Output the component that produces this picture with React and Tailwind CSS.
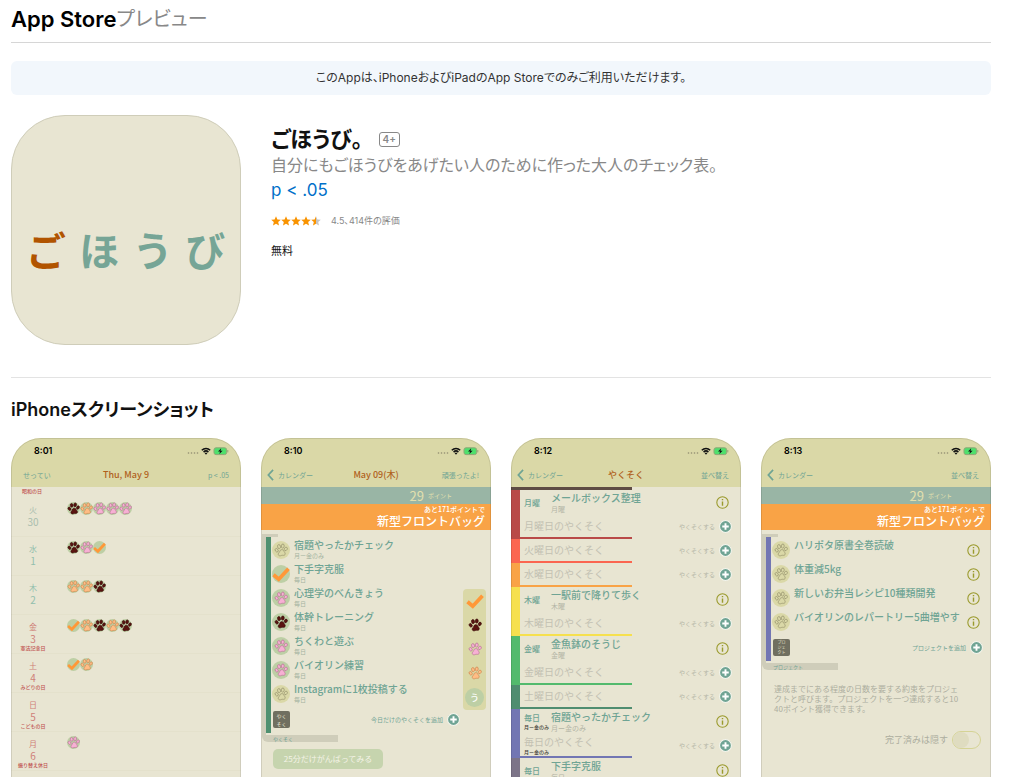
import React from 'react';

const PAW_COLORS = {
  dark: { fill: '#5a1410', stroke: '#3a0a08' },
  orange: { fill: '#ffbd85', stroke: '#cf8850' },
  pink: { fill: '#f7b0d4', stroke: '#b97595' },
  empty: { fill: 'none', stroke: '#95916c' },
};

const Paw = ({ color, className }) => {
  const { fill, stroke } = PAW_COLORS[color];
  return (
    <svg viewBox="0 0 24 24" className={className} fill={fill} stroke={stroke} strokeWidth="1.2">
      <ellipse cx="4.6" cy="12.5" rx="2.4" ry="3.2" transform="rotate(-35 4.6 12.5)" />
      <ellipse cx="8.6" cy="6.2" rx="2.5" ry="3.5" transform="rotate(-10 8.6 6.2)" />
      <ellipse cx="15" cy="5.2" rx="2.5" ry="3.5" transform="rotate(8 15 5.2)" />
      <ellipse cx="20.2" cy="10.2" rx="2.4" ry="3.2" transform="rotate(30 20.2 10.2)" />
      <path d="M12.2 11.6c2.6-.8 4.3.8 4.9 2.7.5 1.500 2.300 2.300 2.200 4.300-.1 2.300-2.400 2.900-4.300 2.400-1.500-.4-2.300.7-4.200 1-2.300.2-4-1.300-3.500-3.500.4-1.500 1.900-2 2.400-3.700.4-1.500 1-2.700 2.500-3.200z" />
    </svg>
  );
};

const Check = ({ className }) => (
  <svg viewBox="0 0 24 24" className={className} fill="none" stroke="#ff9838" strokeWidth="5">
    <path d="M2 13l7 6L22 5" />
  </svg>
);

// Round stamp used in the calendar and in the lists
const Stamp = ({ type, full }) => (
  <span className="flex size-full items-center justify-center">
    {type === 'check' ? (
      <Check className="size-full" />
    ) : (
      <Paw color={type} className={full ? 'size-full' : 'size-[14px]'} />
    )}
  </span>
);

const PlusIcon = ({ className }) => (
  <svg viewBox="0 0 24 24" className={className}>
    <circle cx="12" cy="12" r="11" fill="#6fa494" stroke="#f6f6ee" strokeWidth="2" />
    <path d="M12 6v12M6 12h12" stroke="#fff" strokeWidth="3.5" />
  </svg>
);

const InfoButton = () => (
  <button aria-label="info" className="flex size-[13px] shrink-0">
    <svg viewBox="0 0 24 24" className="size-full" fill="none" stroke="#9a9a2c">
      <circle cx="12" cy="12" r="10.5" strokeWidth="2" />
      <path d="M12 10v8M12 5.5v2.5" strokeWidth="2.6" />
    </svg>
  </button>
);

const StatusBar = ({ time }) => (
  <div className="flex h-[25px] items-center pl-[23px] pr-[12px] text-black">
    <span className="font-['Inter',sans-serif] text-[9px] font-semibold">{time}</span>
    <svg viewBox="0 0 42 10" className="ml-auto h-[10px] w-[42px]">
      <g fill="#8f8d70">
        <circle cx="1.5" cy="7" r=".8" />
        <circle cx="4.5" cy="7" r=".8" />
        <circle cx="7.5" cy="7" r=".8" />
        <circle cx="10.5" cy="7" r=".8" />
      </g>
      <g fill="none" stroke="#111" strokeWidth="1.5">
        <path d="M14.8 4.200a6 6 0 0 1 8.400 0" />
        <path d="M16.600 6.100a3.400 3.400 0 0 1 4.800 0" />
      </g>
      <path d="M19 8.800l-1.300-1.600a1.800 1.800 0 0 1 2.600 0z" fill="#111" />
      <rect x="27" y="1.8" width="12.6" height="6.8" rx="2" fill="#4fe06c" stroke="#8fa777" />
      <path d="M40.8 4v2.4" stroke="#8fa777" strokeWidth="1" />
      <path d="M34.2 2.300l-3.200 3.200h2l-.6 2.600 3.200-3.300h-2z" fill="#111" />
    </svg>
  </div>
);

const Phone = ({ time, left, back, title, right, children }) => (
  <article className="relative h-[498px] overflow-hidden rounded-[30px] bg-[#e8e5d2] font-['Noto_Sans_CJK_JP',sans-serif] text-[#6fa494] after:pointer-events-none after:absolute after:inset-0 after:rounded-[30px] after:border after:border-black/10">
    <header className="h-[49px] bg-[#dad8a7]">
      <StatusBar time={time} />
      <div className="grid h-6 grid-cols-3 items-center text-[7px] leading-3">
        <button className={`flex items-center gap-1 text-left ${back ? 'pl-[6px]' : 'pl-[12px]'}`}>
          {back && (
            <svg viewBox="0 0 8 14" className="h-[12px] w-[7px]" fill="none" stroke="currentColor" strokeWidth="2">
              <path d="M7 1L1.5 7 7 13" />
            </svg>
          )}
          {left}
        </button>
        <span className="text-center text-[9px] font-medium text-[#b0601c]">{title}</span>
        <button className="pr-[12px] text-right">{right}</button>
      </div>
    </header>
    {children}
  </article>
);

const DAYS = [
  { day: '火', date: '30', tone: 'text-[#a9bdae]', stamps: ['dark', 'orange', 'pink', 'pink', 'pink'] },
  { day: '水', date: '1', tone: 'text-[#92bfad]', stamps: ['dark', 'pink', 'check'] },
  { day: '木', date: '2', tone: 'text-[#92bfad]', stamps: ['orange', 'orange', 'dark'] },
  { day: '金', date: '3', tone: 'text-[#cf7f78]', holiday: '憲法記念日', stamps: ['check', 'orange', 'dark', 'orange', 'dark'] },
  { day: '土', date: '4', tone: 'text-[#cf7f78]', holiday: 'みどりの日', stamps: ['check', 'orange'] },
  { day: '日', date: '5', tone: 'text-[#cf7f78]', holiday: 'こどもの日', stamps: [] },
  { day: '月', date: '6', tone: 'text-[#cf7f78]', holiday: '振り替え休日', stamps: ['pink'] },
];

const CalendarShot = () => (
  <Phone time="8:01" left="せってい" title="Thu, May 9" right="p < .05">
    <p className="h-[11px] pl-[11px] text-[5px] font-medium leading-[8px] text-[#c0514f]">昭和の日</p>
    {DAYS.map((row) => (
      <div key={row.date} className="flex h-[39px] border-b border-[#e4e1cc]">
        <div className={`flex w-[44px] flex-col items-center pt-[6px] ${row.tone}`}>
          <span className="text-[8px] leading-[12px]">{row.day}</span>
          <span className="text-[10px] leading-[11px]">{row.date}</span>
          <span className="text-[5px] font-medium leading-[7px] text-[#c0514f]">{row.holiday}</span>
        </div>
        <div className="flex pl-[12px] pt-[4px]">
          {row.stamps.map((type, i) => (
            <span key={i} className="size-[13px] rounded-full bg-[#bdcfa5]">
              <Stamp type={type} full />
            </span>
          ))}
        </div>
      </div>
    ))}
  </Phone>
);

const PointsBanner = () => (
  <>
    <div className="flex h-[17px] items-center justify-end gap-1 bg-[#99b5a5] pr-[39px] text-[#e3e0ae]">
      <span className="text-[13px] leading-4">29</span>
      <span className="text-[6px]">ポイント</span>
    </div>
    <div className="h-[26px] bg-[#f9a346] pr-[6px] text-right font-medium text-white">
      <p className="text-[7px] leading-[10px]">あと171ポイントで</p>
      <p className="text-[12px] leading-[13px]">新型フロントバッグ</p>
    </div>
  </>
);

// List with the coloured spine on the left and a label at the foot
const Folder = ({ spine, label, children }) => (
  <div className="pl-px pt-[4px]">
    <div className="h-[3px] w-[16px] bg-[#cfcdba]" />
    <div className="flex">
      <div className="w-1 bg-[#cfcdba]" />
      <div className="flex flex-1 pb-[2px]">
        <div className={`w-[5px] ${spine}`} />
        <div className="flex-1 pt-px">{children}</div>
      </div>
    </div>
    <div className="h-[7px] w-[76px] rounded-bl-md bg-[#cfcdba] pl-[11px] text-[5px] leading-[7px]">{label}</div>
  </div>
);

const FolderRow = ({ title, sub, stamp, info }) => (
  <div className="flex h-6 items-center pl-px">
    <span className={`size-[18px] shrink-0 rounded-full ${stamp === 'empty' ? 'bg-[#dad8a7]' : 'bg-[#bdcfa5]'}`}>
      <Stamp type={stamp} />
    </span>
    <div className="h-full flex-1 pl-1">
      <p className="text-[10px] font-medium leading-[14px]">{title}</p>
      <p className="text-[6px] leading-[8px] text-[#a4b3a0]">{sub}</p>
    </div>
    {info && (
      <span className="flex pr-[11px]">
        <InfoButton />
      </span>
    )}
  </div>
);

const FolderAdd = ({ tag, tagText, text, className }) => (
  <div className={`flex h-[27px] items-center pl-[2px] ${className}`}>
    <span
      className={`flex size-[17px] flex-col items-center justify-center rounded-xs bg-[#706f60] text-[#e8e5d2] ${tagText}`}
    >
      {tag.map((line) => (
        <span key={line}>{line}</span>
      ))}
    </span>
    <button className="ml-auto flex items-center gap-1 text-[6px]">
      {text}
      <PlusIcon className="size-[13px]" />
    </button>
  </div>
);

const TODAY = [
  { title: '宿題やったかチェック', sub: '月ー金のみ', stamp: 'empty' },
  { title: '下手字克服', sub: '毎日', stamp: 'check' },
  { title: '心理学のべんきょう', sub: '毎日', stamp: 'pink' },
  { title: '体幹トレーニング', sub: '毎日', stamp: 'dark' },
  { title: 'ちくわと遊ぶ', sub: '毎日', stamp: 'pink' },
  { title: 'バイオリン練習', sub: '毎日', stamp: 'pink' },
  { title: 'Instagramに1枚投稿する', sub: '毎日', stamp: 'empty' },
];

const TodayShot = () => (
  <Phone time="8:10" back left="カレンダー" title="May 09(木)" right="頑張ったよ!">
    <PointsBanner />
    <div className="relative">
      <Folder spine="bg-[#4f9070]" label="やくそく">
        {TODAY.map((row) => (
          <FolderRow key={row.title} {...row} />
        ))}
        <FolderAdd
          tag={['やく', 'そく']}
          tagText="text-[5px] leading-[8px]"
          text="今日だけのやくそくを追加"
          className="pr-[31px]"
        />
      </Folder>
      <div className="absolute right-[5px] top-[59px] flex w-[23px] flex-col items-center gap-[6px] rounded-sm bg-[#dad8a7] py-[3px]">
        <Check className="size-[18px]" />
        <Paw color="dark" className="my-[2px] size-[14px]" />
        <Paw color="pink" className="my-[2px] size-[14px]" />
        <Paw color="orange" className="my-[2px] size-[14px]" />
        <span className="flex size-[19px] items-center justify-center rounded-full bg-[#bdcfa5] text-[9px] font-medium text-white">う</span>
      </div>
    </div>
    <button className="ml-[12px] mt-[7px] h-5 w-[110px] rounded-[5px] bg-[#c6d4ae] text-[8px] text-[#f4f3e6]">
      25分だけがんばってみる
    </button>
  </Phone>
);

const WEEK = [
  { name: '月曜日', short: '月曜', title: 'メールボックス整理', sub: '月曜', bar: 'bg-[#b94a48]' },
  { name: '火曜日', bar: 'bg-[#fb6650]' },
  { name: '水曜日', bar: 'bg-[#f9a346]' },
  { name: '木曜日', short: '木曜', title: '一駅前で降りて歩く', sub: '木曜', bar: 'bg-[#f6e04e]' },
  { name: '金曜日', short: '金曜', title: '金魚鉢のそうじ', sub: '金曜', bar: 'bg-[#53ba6d]' },
  { name: '土曜日', bar: 'bg-[#4f8d70]' },
  { name: '毎日', short: '毎日', title: '宿題やったかチェック', sub: '月ー金のみ', only: '月ー金のみ', bar: 'bg-[#7276b3]' },
  { name: '毎日', short: '毎日', title: '下手字克服', sub: '毎日', bar: 'bg-[#7c7488]' },
];

const WeekGroup = ({ group }) => (
  <section className="flex">
    <div className={`w-[9px] ${group.bar}`} />
    <div className="flex-1">
      {group.title && (
        <div className="flex h-[25px] items-center pl-1 pr-[12px]">
          <div className="w-[27px]">
            <p className="text-[8px] font-medium leading-[10px]">{group.short}</p>
            {group.only && <p className="text-[5px] font-medium leading-[7px] text-[#3c3c34]">{group.only}</p>}
          </div>
          <div className="h-full flex-1">
            <p className="text-[10px] font-medium leading-[15px]">{group.title}</p>
            <p className="text-[7px] leading-[9px] text-[#b4b5a6]">{group.sub}</p>
          </div>
          <InfoButton />
        </div>
      )}
      <div className="flex h-[22px] items-center pl-1 pr-[9px] text-[#c3c1b2]">
        <div>
          <p className="text-[10px] leading-[12px]">{group.name}のやくそく</p>
          {group.only && <p className="text-[5px] font-medium leading-[7px] text-[#3c3c34]">{group.only}</p>}
        </div>
        <button className="ml-auto flex items-center gap-1 text-[6px] text-[#b4b5a6]">
          やくそくする
          <PlusIcon className="size-[13px]" />
        </button>
      </div>
      <div className={`h-[2px] w-[112px] ${group.bar}`} />
    </div>
  </section>
);

const WeekShot = () => (
  <Phone time="8:12" back left="カレンダー" title="やくそく" right="並べ替え">
    <div className="h-[3px] w-[121px] bg-[#5e4c44]" />
    {WEEK.map((group, i) => (
      <WeekGroup key={i} group={group} />
    ))}
  </Phone>
);

const PROJECTS = ['ハリポタ原書全巻読破', '体重減5kg', '新しいお弁当レシピ10種類開発', 'バイオリンのレパートリー5曲増やす'];

const ProjectShot = () => (
  <Phone time="8:13" back left="カレンダー" right="並べ替え">
    <PointsBanner />
    <Folder spine="bg-[#7276b3]" label="プロジェクト">
      {PROJECTS.map((title) => (
        <FolderRow key={title} title={title} stamp="empty" info />
      ))}
      <FolderAdd
        tag={['プロ', 'ジェ', 'クト']}
        tagText="text-[4px] leading-[5px]"
        text="プロジェクトを追加"
        className="pr-[8px]"
      />
    </Folder>
    <p className="pl-[13px] pt-[14px] text-[8px] leading-[10px] text-[#adae9f]">
      達成までにある程度の日数を要する約束をプロジェ
      <br />
      クトと呼びます。プロジェクトを一つ達成すると10
      <br />
      40ポイント獲得できます。
    </p>
    <label className="mt-[17px] flex items-center justify-end gap-1 pr-[10px] text-[9px] text-[#adae9f]">
      完了済みは隠す
      <input
        type="checkbox"
        className="h-[18px] w-[29px] appearance-none rounded-full border border-[#d5d395] before:block before:size-4 before:rounded-full before:bg-[#dfdcc0]"
      />
    </label>
  </Phone>
);

const STAR_PATH = 'M5 .3l1.4 3.200 3.400.3-2.600 2.300.8 3.400L5 7.700 2 9.500l.8-3.400L.2 3.800l3.400-.3z';

const Stars = () => (
  <svg viewBox="0 0 50 10" className="h-[10px] w-[50px]" aria-hidden="true">
    <defs>
      <linearGradient id="half">
        <stop offset="50%" stopColor="#f99300" />
        <stop offset="50%" stopColor="#c4c4c6" />
      </linearGradient>
    </defs>
    {[0, 10, 20, 30, 40].map((x) => (
      <path key={x} d={STAR_PATH} transform={`translate(${x} 0)`} fill={x === 40 ? 'url(#half)' : '#f99300'} />
    ))}
  </svg>
);

const AppIcon = () => (
  <div className="flex size-[230px] shrink-0 items-center justify-between rounded-[54px] border border-[#cfcdb9] bg-[#e8e5d2] px-4 pt-[38px] font-['Noto_Sans_CJK_JP',sans-serif] text-[40px] font-bold leading-none text-[#76a596]">
    <span className="text-[#b15400]">ご</span>
    <span>ほ</span>
    <span>う</span>
    <span>び</span>
  </div>
);

export default function App() {
  return (
    <div
      lang="ja"
      className="h-screen overflow-hidden bg-white pl-[11px] pr-[33px] font-['Inter','Noto_Sans_CJK_JP',sans-serif] text-[#111] [font-feature-settings:'palt']"
    >
      <header className="flex h-[43px] items-center border-b border-[#d6d6d6] pb-1 text-[22px]">
        <a href="#" className="font-semibold text-black">App Store</a>
        <span className="text-[20px] text-[#888]">プレビュー</span>
      </header>

      <p className="mt-[18px] flex h-[34px] items-center justify-center rounded-md bg-[#f2f7fc] text-[12px] text-[#333]">
        このAppは、iPhoneおよびiPadのApp Storeでのみご利用いただけます。
      </p>

      <section className="mt-5 flex gap-[30px] border-b border-[#e3e3e3] pb-8">
        <AppIcon />
        <div className="pt-[10px]">
          <h1 className="flex h-7 items-center gap-4 text-[22px] font-bold">
            ごほうび。
            <span className="rounded-[3px] border border-[#888] px-[3px] text-[10px] font-semibold leading-[13px] text-[#888]">4+</span>
          </h1>
          <h2 className="text-[16px] leading-6 text-[#888]">自分にもごほうびをあげたい人のために作った大人のチェック表。</h2>
          <a href="#" className="block text-[17px] leading-[26px] text-[#0070c9]">p &lt; .05</a>
          <div className="mt-[10px] flex h-4 items-center gap-[10px] text-[9px] text-[#888]">
            <Stars />
            <span>4.5、414件の評価</span>
          </div>
          <p className="mt-[14px] text-[11px] leading-4">無料</p>
        </div>
      </section>

      <section className="pt-[18px]">
        <h2 className="text-[18px] font-semibold leading-7">iPhoneスクリーンショット</h2>
        <div className="mt-[14px] grid grid-cols-4 gap-5 [font-feature-settings:normal]">
          <CalendarShot />
          <TodayShot />
          <WeekShot />
          <ProjectShot />
        </div>
      </section>
    </div>
  );
}
